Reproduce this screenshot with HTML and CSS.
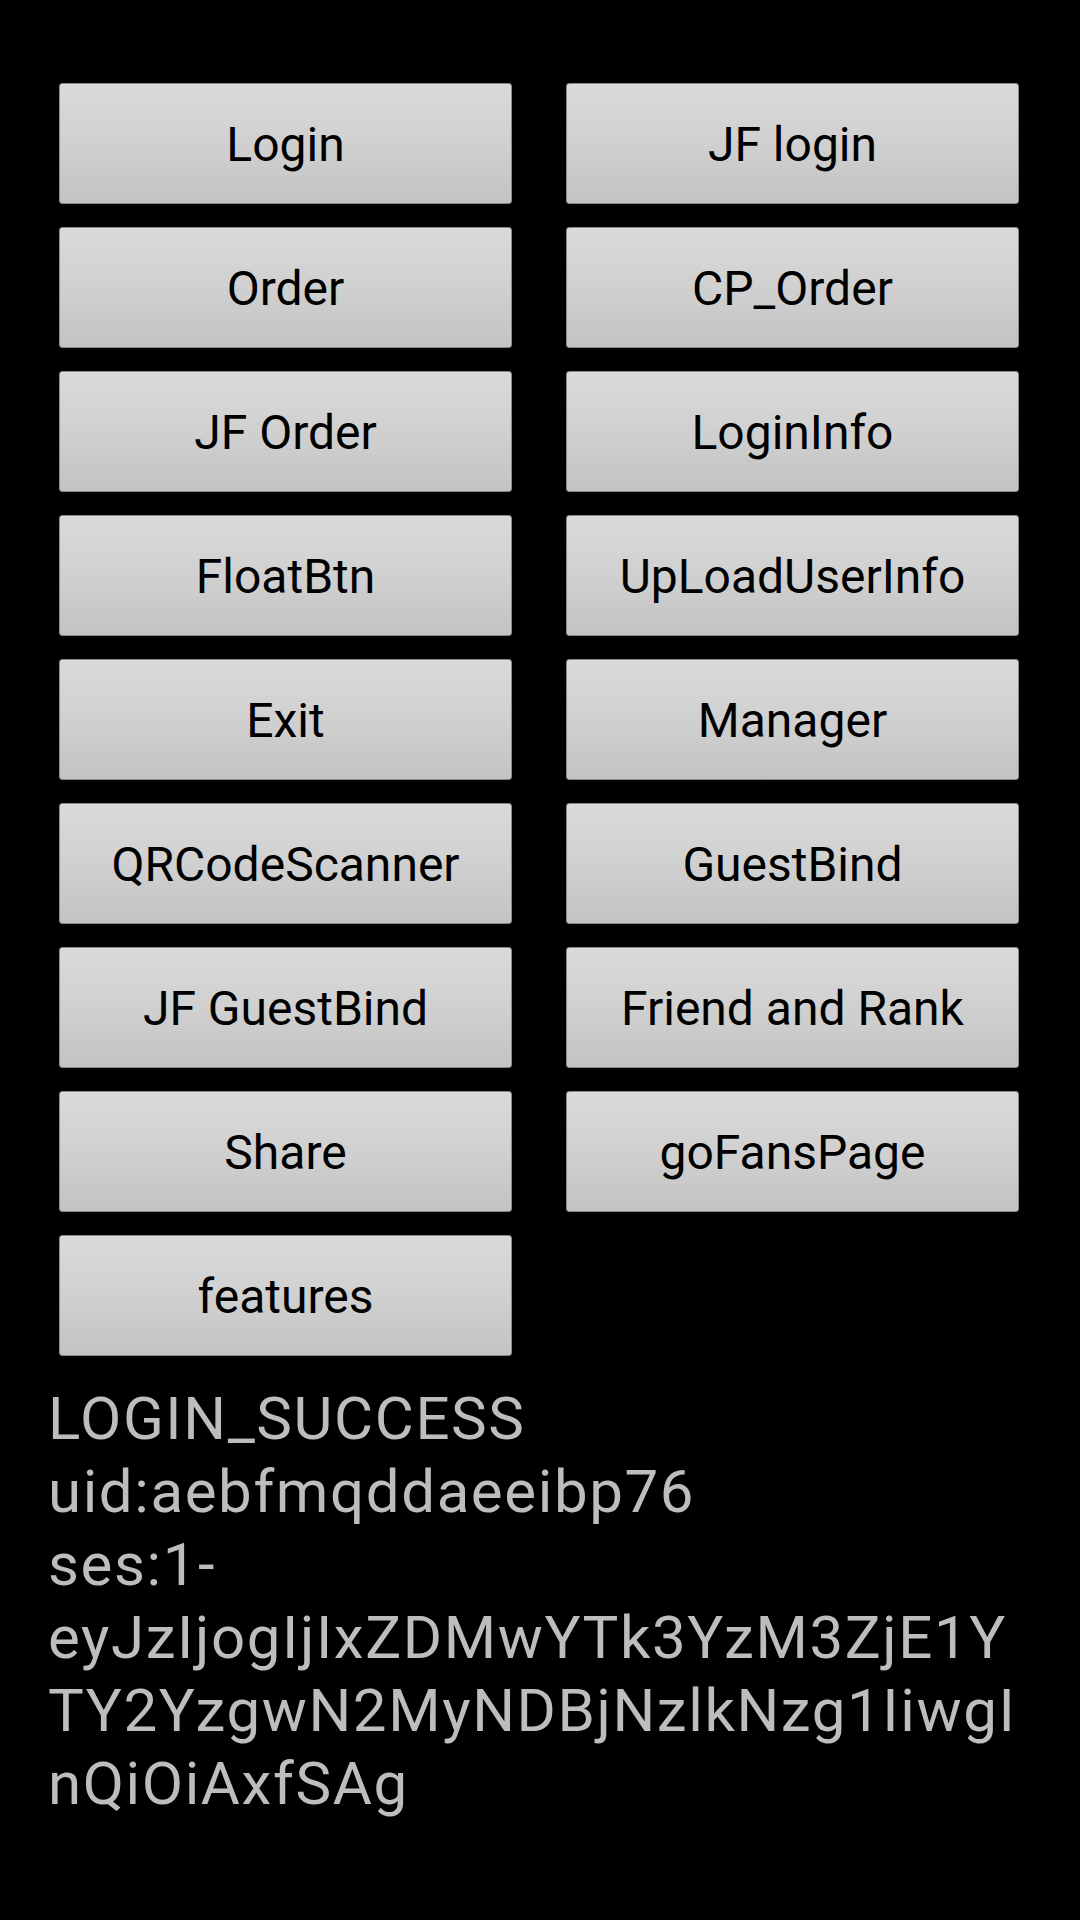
FILE: index.html
```html
<!DOCTYPE html>
<html>
<head>
<meta charset="utf-8">
<link rel="stylesheet" href="styles.css">
</head>
<body>
<div class="screen">
  <div class="grid">
    <div class="btn">Login</div>
    <div class="btn">JF login</div>
    <div class="btn">Order</div>
    <div class="btn">CP_Order</div>
    <div class="btn">JF Order</div>
    <div class="btn">LoginInfo</div>
    <div class="btn">FloatBtn</div>
    <div class="btn">UpLoadUserInfo</div>
    <div class="btn">Exit</div>
    <div class="btn">Manager</div>
    <div class="btn">QRCodeScanner</div>
    <div class="btn">GuestBind</div>
    <div class="btn">JF GuestBind</div>
    <div class="btn">Friend and Rank</div>
    <div class="btn">Share</div>
    <div class="btn">goFansPage</div>
    <div class="btn">features</div>
  </div>
  <div class="log">
    <div class="line">LOGIN_SUCCESS</div>
    <div class="line">uid:aebfmqddaeeibp76</div>
    <div class="line">ses:1-</div>
    <div class="line">eyJzIjogIjIxZDMwYTk3YzM3ZjE1Y</div>
    <div class="line">TY2YzgwN2MyNDBjNzlkNzg1IiwgI</div>
    <div class="line">nQiOiAxfSAg</div>
  </div>
</div>
</body>
</html>
```
FILE: styles.css
```css
html, body {
  margin: 0;
  padding: 0;
  background: #000;
}
body {
  width: 1080px;
  height: 1920px;
  overflow: hidden;
  font-family: Roboto, "Liberation Sans", sans-serif;
}
.screen {
  padding: 83px 61px 0 59px;
}
.grid {
  display: grid;
  grid-template-columns: 453px 453px;
  column-gap: 54px;
  row-gap: 23px;
  grid-auto-rows: 121px;
}
.btn {
  display: flex;
  align-items: center;
  justify-content: center;
  background: linear-gradient(to bottom, #dadada 0%, #cfcfcf 55%, #c3c3c3 100%);
  border: 1px solid #8a8a8a;
  border-radius: 3px;
  box-sizing: border-box;
  color: #000;
  font-size: 48px;
  padding-top: 2px;
}
.log {
  margin-top: 26px;
  margin-left: -11px;
  color: #bdbdbd;
  font-size: 60px;
  letter-spacing: 1.6px;
  line-height: 73px;
}
.line {
  white-space: nowrap;
}
```
